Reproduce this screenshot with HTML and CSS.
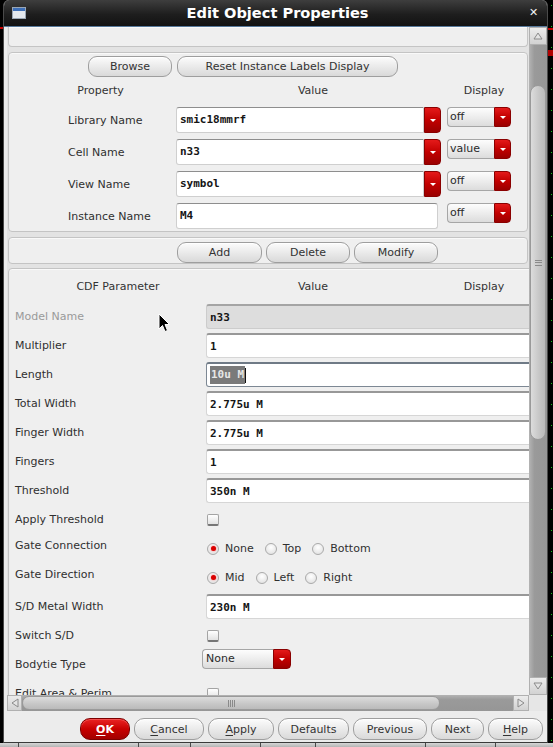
FILE: index.html
```html
<!DOCTYPE html>
<html>
<head>
<meta charset="utf-8">
<title>Edit Object Properties</title>
<link rel="stylesheet" href="styles.css">
</head>
<body>
<div class="screen">
  <div class="edge-left"></div>
  <div class="window">
    <div class="titlebar">
      <svg class="appicon" width="14" height="12" viewBox="0 0 14 12"><rect x="0.5" y="0.5" width="13" height="11" fill="#e4e8ee" stroke="#9aa6b4"/><rect x="1" y="1" width="12" height="3" fill="#3d6fb8"/></svg>
      <div class="title">Edit Object Properties</div>
      <div class="close">&#x2715;</div>
    </div>
    <div class="body">
      <div class="viewport">
        <div class="content">
          <div class="frame frame-top"></div>

          <div class="frame frame-inst">
            <div class="btnrow">
              <div class="btn b-browse">Browse</div>
              <div class="btn b-reset">Reset Instance Labels Display</div>
            </div>
            <div class="hdr">
              <div class="h1">Property</div>
              <div class="h2">Value</div>
              <div class="h3">Display</div>
            </div>
            <div class="prows">
              <div class="prow">
                <div class="plabel">Library Name</div>
                <div class="vcombo"><div class="vfield">smic18mmrf</div><div class="drop"></div></div>
                <div class="dcombo"><div class="dtxt">off</div><div class="drop"></div></div>
              </div>
              <div class="prow">
                <div class="plabel">Cell Name</div>
                <div class="vcombo"><div class="vfield">n33</div><div class="drop"></div></div>
                <div class="dcombo"><div class="dtxt">value</div><div class="drop"></div></div>
              </div>
              <div class="prow">
                <div class="plabel">View Name</div>
                <div class="vcombo"><div class="vfield">symbol</div><div class="drop"></div></div>
                <div class="dcombo"><div class="dtxt">off</div><div class="drop"></div></div>
              </div>
              <div class="prow">
                <div class="plabel">Instance Name</div>
                <div class="vcombo"><div class="vfield inst">M4</div></div>
                <div class="dcombo"><div class="dtxt">off</div><div class="drop"></div></div>
              </div>
            </div>
          </div>

          <div class="frame frame-btns">
            <div class="btn b-add">Add</div>
            <div class="btn b-del">Delete</div>
            <div class="btn b-mod">Modify</div>
          </div>

          <div class="frame frame-cdf">
            <div class="chdr">
              <div class="c1">CDF Parameter</div>
              <div class="c2">Value</div>
              <div class="c3">Display</div>
            </div>
            <div class="crows">
              <div class="crow"><div class="clabel dim">Model Name</div><div class="cfield ro">n33</div></div>
              <div class="crow"><div class="clabel">Multiplier</div><div class="cfield">1</div></div>
              <div class="crow"><div class="clabel">Length</div><div class="cfield focus"><span class="sel">10u M</span><span class="caret"></span></div></div>
              <div class="crow"><div class="clabel">Total Width</div><div class="cfield">2.775u M</div></div>
              <div class="crow"><div class="clabel">Finger Width</div><div class="cfield">2.775u M</div></div>
              <div class="crow"><div class="clabel">Fingers</div><div class="cfield">1</div></div>
              <div class="crow"><div class="clabel">Threshold</div><div class="cfield">350n M</div></div>
              <div class="crow"><div class="clabel">Apply Threshold</div><div class="chk"></div></div>
              <div class="crow">
                <div class="clabel up">Gate Connection</div>
                <div class="radios">
                  <div class="opt"><span class="radio on"></span>None</div>
                  <div class="opt"><span class="radio"></span>Top</div>
                  <div class="opt"><span class="radio"></span>Bottom</div>
                </div>
              </div>
              <div class="crow">
                <div class="clabel up">Gate Direction</div>
                <div class="radios">
                  <div class="opt"><span class="radio on"></span>Mid</div>
                  <div class="opt"><span class="radio"></span>Left</div>
                  <div class="opt"><span class="radio"></span>Right</div>
                </div>
              </div>
              <div class="crow"><div class="clabel">S/D Metal Width</div><div class="cfield">230n M</div></div>
              <div class="crow"><div class="clabel">Switch S/D</div><div class="chk"></div></div>
              <div class="crow"><div class="clabel">Bodytie Type</div><div class="bcombo"><div class="dtxt">None</div><div class="drop"></div></div></div>
              <div class="crow"><div class="clabel">Edit Area &amp; Perim</div><div class="chk"></div></div>
            </div>
          </div>
        </div>
      </div>
      <div class="vscroll">
        <div class="arrow vup"><svg width="10" height="8" viewBox="0 0 10 8"><path d="M5 1 L9 7 L1 7 Z" fill="#e4e4e4" stroke="#8a8a8a" stroke-width="1"/></svg></div>
        <div class="vtrough"><div class="vthumb"><span class="grip-v"></span></div></div>
        <div class="arrow vdown"><svg width="10" height="8" viewBox="0 0 10 8"><path d="M1 1 L9 1 L5 7 Z" fill="#e4e4e4" stroke="#8a8a8a" stroke-width="1"/></svg></div>
      </div>
      <div class="hscroll">
        <div class="arrow hleft"><svg width="8" height="10" viewBox="0 0 8 10"><path d="M1 5 L7 1 L7 9 Z" fill="#e4e4e4" stroke="#8a8a8a" stroke-width="1"/></svg></div>
        <div class="htrough"><div class="hthumb"><span class="grip-h"></span></div></div>
        <div class="arrow hright"><svg width="8" height="10" viewBox="0 0 8 10"><path d="M7 5 L1 1 L1 9 Z" fill="#e4e4e4" stroke="#8a8a8a" stroke-width="1"/></svg></div>
      </div>
      <div class="corner"></div>
    </div>
    <div class="buttonbar">
      <div class="btn bb ok w-ok"><u>O</u>K</div>
      <div class="btn bb w-cancel"><u>C</u>ancel</div>
      <div class="btn bb w-apply"><u>A</u>pply</div>
      <div class="btn bb w-def">Defaults</div>
      <div class="btn bb w-prev">Previous</div>
      <div class="btn bb w-next">Next</div>
      <div class="btn bb w-help"><u>H</u>elp</div>
    </div>
  </div>
  <div class="edge-right"></div>
</div>
<div class="taskbar">
  <div class="tseg s1"></div><div class="tseg s2"></div><div class="tseg s3"></div><div class="tseg s4"></div><div class="tseg s5"></div><div class="tseg s6"></div><div class="tseg s7"></div><div class="tseg s8"></div>
</div>
<svg class="cursor" width="13" height="20" viewBox="0 0 13 20"><path d="M1 1 L1 16 L4.5 12.5 L7 18.5 L9.5 17.5 L7 11.5 L11.5 11.5 Z" fill="#000" stroke="#fff" stroke-width="1"/></svg>
</body>
</html>
```

FILE: styles.css
```css
* { box-sizing: border-box; }
html, body { margin: 0; padding: 0; }
body {
  width: 553px;
  height: 747px;
  overflow: hidden;
  background: #000;
  font-family: "DejaVu Sans", "Noto Sans", sans-serif;
  font-size: 11px;
  color: #303030;
  position: relative;
}
.screen { display: flex; height: 743px; }
.edge-left {
  width: 3px;
  background: linear-gradient(to bottom, #000 0 27px, #c40000 27px 29px, #000 29px);
}
.edge-right {
  width: 5px;
  background-color: #000;
  background-image:
    linear-gradient(to bottom, transparent 0 28px, #c40000 28px 30px, transparent 30px 50px, #b00000 50px 56px, transparent 56px),
    repeating-linear-gradient(to bottom, transparent 0 5px, #19c219 5px 6px, transparent 6px 21px);
  background-size: 100% 100%, 1px 100%;
  background-position: 0 0, 3px 0;
  background-repeat: no-repeat;
}
.window {
  width: 545px;
  display: flex;
  flex-direction: column;
  background: #ececec;
  border-left: 1px solid #4a4a4a;
  border-right: 1px solid #4a4a4a;
  border-bottom: 1px solid #3a3a3a;
  border-radius: 6px 6px 0 0;
  overflow: hidden;
}
.titlebar {
  height: 27px;
  flex: none;
  display: flex;
  align-items: center;
  background: linear-gradient(#3e3e3e, #1e1e1e 55%, #121212);
  border-bottom: 1px solid #56789a;
  padding: 0 9px 1px 8px;
}
.appicon { flex: none; margin-top: 1px; }
.title {
  flex: 1;
  text-align: center;
  color: #fff;
  font-weight: bold;
  font-size: 14.6px;
}
.close {
  flex: none;
  width: 9px;
  color: #f2f2f2;
  font-size: 11px;
  font-weight: bold;
  line-height: 11px;
  text-align: center;
}
.body {
  flex: none;
  display: grid;
  grid-template-columns: 522px 18px;
  grid-template-rows: 668px 16px;
  padding-left: 3px;
}
.viewport { overflow: hidden; background: #e3e3e3; }
.content { width: 650px; padding-left: 1px; }

.frame {
  background: #efefef;
  border: 1px solid #c4c4c4;
  border-radius: 4px;
  box-shadow: inset 0 1px 0 #f9f9f9;
}
.frame-top {
  width: 520px;
  height: 20px;
  border-top: none;
  border-radius: 0 0 4px 4px;
}
.frame-inst {
  width: 520px;
  height: 180px;
  margin-top: 5px;
  padding-top: 3px;
}
.btn {
  display: flex;
  align-items: center;
  justify-content: center;
  border: 1px solid #9e9e9e;
  border-radius: 9px;
  background: linear-gradient(#fcfcfc, #ececec 45%, #d9d9d9);
  box-shadow: inset 0 1px 0 #fff;
  color: #333;
  white-space: nowrap;
}
.btnrow { display: flex; gap: 5px; padding-left: 79px; height: 21px; }
.b-browse { width: 84px; }
.b-reset { width: 221px; }

.hdr { display: flex; height: 14px; line-height: 14px; margin-top: 7px; color: #333; }
.hdr .h1 { width: 183px; text-align: center; }
.hdr .h2 { width: 242px; text-align: center; }
.hdr .h3 { width: 74px; margin-left: 13px; text-align: center; }

.prows { display: flex; flex-direction: column; gap: 6px; margin-top: 9px; }
.prow {
  display: grid;
  grid-template-columns: 108px 271px 64px;
  padding-left: 59px;
  align-items: start;
}
.plabel { align-self: center; color: #303030; }
.vcombo { display: flex; height: 26px; width: 265px; }
.vfield {
  flex: 1;
  background: #fff;
  border: 1px solid #cfcfcf;
  border-top: 1px solid #8e8e8e;
  border-radius: 3px 0 0 3px;
  padding-left: 3px;
  font-family: "DejaVu Sans Mono", monospace;
  font-weight: bold;
  font-size: 11px;
  line-height: 24px;
  color: #151515;
}
.vfield.inst { flex: none; width: 262px; border-radius: 3px; }
.drop {
  flex: none;
  width: 17px;
  display: flex;
  align-items: center;
  justify-content: center;
  background: linear-gradient(#e41a1a, #c20000 50%, #9a0000);
  border: 1px solid #8a0000;
  border-radius: 0 4px 4px 0;
}
.drop::after {
  content: "";
  width: 0;
  height: 0;
  border-left: 3px solid transparent;
  border-right: 3px solid transparent;
  border-top: 3px solid #fff;
}
.dcombo { display: flex; height: 20px; width: 64px; }
.dtxt {
  flex: 1;
  background: linear-gradient(#fdfdfd, #ededed 50%, #dcdcdc);
  border: 1px solid #a6a6a6;
  border-right: none;
  border-radius: 4px 0 0 4px;
  padding-left: 2px;
  line-height: 18px;
  color: #2a2a2a;
}

.frame-btns {
  width: 520px;
  height: 27px;
  margin-top: 5px;
  padding: 4px 0 0 168px;
  display: flex;
  gap: 4px;
}
.frame-btns .btn { height: 21px; }
.b-add { width: 85px; }
.b-del { width: 84px; }
.b-mod { width: 84px; }

.frame-cdf {
  width: 640px;
  margin-top: 4px;
  height: 460px;
}
.chdr { display: flex; height: 35px; align-items: center; color: #333; }
.chdr .c1 { width: 218px; text-align: center; }
.chdr .c2 { width: 172px; text-align: center; }
.chdr .c3 { width: 170px; text-align: center; }
.crows { display: flex; flex-direction: column; gap: 4px; padding-left: 6px; }
.crow { display: flex; height: 25px; align-items: center; }
.clabel { width: 191px; flex: none; color: #303030; white-space: nowrap; }
.clabel.dim { color: #9a9a9a; }
.clabel.up { margin-top: -6px; }
.cfield {
  width: 420px;
  height: 25px;
  background: #fff;
  border: 1px solid #d6d6d6;
  border-top: 2px solid #989898;
  border-right: none;
  border-radius: 3px 0 0 3px;
  padding-left: 3px;
  font-family: "DejaVu Sans Mono", monospace;
  font-weight: bold;
  font-size: 11px;
  line-height: 21px;
  color: #151515;
  display: flex;
  align-items: center;
}
.cfield.ro { background: #dddddd; border-color: #cccccc; border-top-color: #a4a4a4; }
.cfield.focus { border: 1px solid #7d8894; border-top: 2px solid #6f7a86; }
.sel { background: #7a7a7a; color: #e6e6e6; line-height: 18px; padding: 0 1px; }
.caret { width: 1px; height: 15px; background: #111; }

.chk {
  width: 12px;
  height: 12px;
  margin-left: 1px;
  border: 1px solid #a4a4a4;
  border-bottom: 2px solid #767676;
  border-radius: 2px;
  background: linear-gradient(#ffffff, #e2e2e2);
}
.radios { display: flex; gap: 11px; align-items: center; margin-left: 1px; }
.opt { display: flex; align-items: center; color: #303030; }
.radio {
  width: 12px;
  height: 12px;
  margin-right: 6px;
  border-radius: 50%;
  border: 1px solid #aaaaaa;
  background: radial-gradient(circle at 50% 35%, #ffffff, #dcdcdc);
  display: flex;
  align-items: center;
  justify-content: center;
}
.radio.on::after {
  content: "";
  width: 5px;
  height: 5px;
  border-radius: 50%;
  background: #d80000;
  box-shadow: 0 0 2px #ff6060;
}
.bcombo {
  display: flex;
  width: 89px;
  height: 20px;
  margin-left: -4px;
  align-self: flex-start;
  margin-top: -3px;
}
.bcombo .dtxt { padding-left: 3px; }
.bcombo .drop { width: 18px; }

.vscroll { display: flex; flex-direction: column; background: #9c9c9c; }
.arrow {
  flex: none;
  display: flex;
  align-items: center;
  justify-content: center;
  background: linear-gradient(#ececec, #d2d2d2);
  border: 1px solid #b0b0b0;
}
.vup, .vdown { height: 18px; }
.vtrough {
  flex: 1;
  padding: 40px 1px 0 1px;
  background: linear-gradient(90deg, #b4b4b4, #9a9a9a 30%, #969696);
}
.vthumb {
  height: 355px;
  border: 1px solid #9a9a9a;
  border-radius: 8px;
  background: linear-gradient(90deg, #dcdcdc, #c6c6c6 60%, #bababa);
  display: flex;
  align-items: center;
  justify-content: center;
}
.grip-v {
  width: 7px;
  height: 6px;
  border-top: 1px solid #8a8a8a;
  border-bottom: 1px solid #8a8a8a;
  background: linear-gradient(#8a8a8a, #8a8a8a) center / 100% 1px no-repeat;
}
.hscroll { display: flex; background: #9c9c9c; }
.hleft { width: 15px; }
.hright { width: 16px; }
.htrough {
  flex: 1;
  padding: 1px 0;
  background: linear-gradient(#b4b4b4, #9a9a9a 30%, #969696);
}
.hthumb {
  width: 418px;
  height: 100%;
  border: 1px solid #9a9a9a;
  border-radius: 8px;
  background: linear-gradient(#dcdcdc, #c6c6c6 60%, #bababa);
  display: flex;
  align-items: center;
  justify-content: center;
}
.grip-h {
  width: 7px;
  height: 7px;
  border-left: 1px solid #8a8a8a;
  border-right: 1px solid #8a8a8a;
  background: linear-gradient(90deg, transparent 1px, #8a8a8a 1px 2px, transparent 2px 3px, #8a8a8a 3px 4px, transparent 4px);
}
.corner { background: #e6e6e6; }

.buttonbar {
  flex: none;
  height: 31px;
  display: flex;
  gap: 4px;
  padding: 7px 0 0 76px;
}
.bb { height: 22px; border-radius: 10px; }
.bb u { text-decoration: underline; text-underline-offset: 2px; }
.ok {
  background: linear-gradient(#ea2424, #c80000 50%, #a20000);
  border-color: #7c0000;
  box-shadow: inset 0 1px 0 #f05050;
  color: #fff;
  font-weight: bold;
}
.w-ok { width: 50px; }
.w-cancel { width: 70px; }
.w-apply { width: 66px; }
.w-def { width: 71px; }
.w-prev { width: 74px; }
.w-next { width: 53px; }
.w-help { width: 55px; }

.taskbar { height: 4px; display: flex; background: #bfbfbf; }
.tseg { height: 4px; border-left: 1px solid #4a4a4a; background: linear-gradient(#d6d6d6, #b4b4b4); }
.s1 { width: 18px; border-left: none; }
.s2 { width: 120px; }
.s3 { width: 52px; }
.s4 { width: 70px; }
.s5 { width: 55px; }
.s6 { width: 110px; }
.s7 { width: 70px; }
.s8 { flex: 1; }

.cursor { position: absolute; left: 158px; top: 313px; }
```
